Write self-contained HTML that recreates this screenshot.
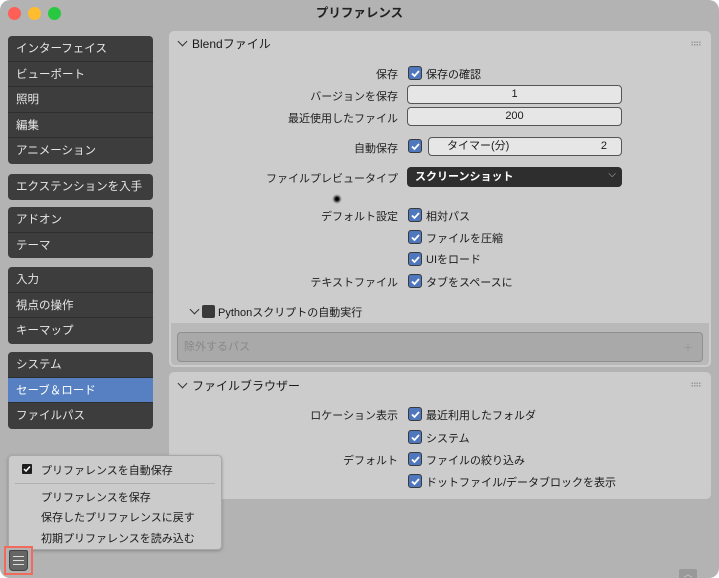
<!DOCTYPE html>
<html><head><meta charset="utf-8"><style>
*{box-sizing:border-box;margin:0;padding:0}
body{width:719px;height:578px;overflow:hidden;background:#fff;font-family:"Liberation Sans","Noto Sans CJK JP",sans-serif;font-size:11px;color:#1a1a1a;position:relative}
.win{position:absolute;left:0;top:0;width:719px;height:578px;background:#b3b3b3;border-radius:10px;overflow:hidden}
.title{position:absolute;left:0;top:0;width:719px;height:28px;text-align:center;line-height:27px;font-weight:bold;font-size:12.5px;color:#222}
.dot{position:absolute;top:7px;width:13px;height:13px;border-radius:50%}
.abs{position:absolute}
.grp{position:absolute;left:8px;width:145px;background:#3d3d3d;border-radius:4px;overflow:hidden}
.grp div{height:25.5px;line-height:26px;color:#e6e6e6;padding-left:8px;border-bottom:1px solid #2e2e2e;font-size:11.5px}
.grp div:last-child{border-bottom:none}
.grp .sel{background:#5680c2;color:#fff}
.panel{position:absolute;left:169px;width:542px;background:#cccccc;border-radius:5px}
.lbl{position:absolute;right:313px;text-align:right;white-space:nowrap;color:#222}
.cb{position:absolute;width:14px;height:14px;background:#4f77bd;border:1px solid #3a3a3a;border-radius:3px}
.cb svg{position:absolute;left:1px;top:1px}
.ct{position:absolute;white-space:nowrap}
.fld{position:absolute;background:#e6e6e6;border:1px solid #555;border-radius:4px;text-align:center;line-height:17px}
.hd{position:absolute;white-space:nowrap;font-size:12px}
.chev{display:inline-block;width:7px;height:7px;border-right:1.3px solid #333;border-bottom:1.3px solid #333;transform:rotate(45deg);margin:0 6px 3px 2px}
.grip{position:absolute;right:10px;top:10px;width:10px;height:5px;background-image:radial-gradient(#999 40%,transparent 45%);background-size:2.5px 2.5px}
</style></head><body>
<div class="win">
<div class="title">プリファレンス</div>
<div class="dot" style="left:8px;background:#fe5f57"></div>
<div class="dot" style="left:28px;background:#febc2e"></div>
<div class="dot" style="left:48px;background:#28c840"></div>

<div class="grp" style="top:36px"><div>インターフェイス</div><div>ビューポート</div><div>照明</div><div>編集</div><div>アニメーション</div></div>
<div class="grp" style="top:174px"><div>エクステンションを入手</div></div>
<div class="grp" style="top:207px"><div>アドオン</div><div>テーマ</div></div>
<div class="grp" style="top:267px"><div>入力</div><div>視点の操作</div><div>キーマップ</div></div>
<div class="grp" style="top:352px"><div>システム</div><div class="sel">セーブ＆ロード</div><div>ファイルパス</div></div>

<div class="panel" style="top:31px;height:336px">
<div class="grip"></div>
<div class="hd" style="left:8px;top:4px"><span class="chev"></span>Blendファイル</div>
<div class="lbl" style="top:35px">保存</div>
<div class="cb" style="left:239px;top:35px"><svg width="11" height="11"><path d="M2 5.5l2.5 2.5 4.5-5" stroke="#fff" stroke-width="1.8" fill="none"/></svg></div>
<div class="ct" style="left:257px;top:35px">保存の確認</div>
<div class="lbl" style="top:57px">バージョンを保存</div>
<div class="fld" style="left:238px;top:54px;width:215px;height:19px">1</div>
<div class="lbl" style="top:79px">最近使用したファイル</div>
<div class="fld" style="left:238px;top:76px;width:215px;height:19px">200</div>
<div class="lbl" style="top:109px">自動保存</div>
<div class="cb" style="left:239px;top:108px"><svg width="11" height="11"><path d="M2 5.5l2.5 2.5 4.5-5" stroke="#fff" stroke-width="1.8" fill="none"/></svg></div>
<div class="fld" style="left:259px;top:106px;width:194px;height:19px;text-align:left;padding-left:18px">タイマー(分)<span style="position:absolute;right:14px">2</span></div>
<div class="lbl" style="top:139px">ファイルプレビュータイプ</div>
<div class="abs" style="left:238px;top:136px;width:215px;height:20px;background:#2e2e2e;border-radius:4px;color:#fff;line-height:20px;padding-left:8px;font-weight:bold">スクリーンショット<span style="position:absolute;right:6px;top:-2px;color:#bbb;font-weight:normal;font-size:10px">⌵</span></div>
<div class="abs" style="left:163px;top:163px;width:10px;height:10px;border-radius:50%;background:radial-gradient(#000 20%,rgba(0,0,0,.3) 50%,transparent 70%)"></div>
<div class="lbl" style="top:177px">デフォルト設定</div>
<div class="cb" style="left:239px;top:177px"><svg width="11" height="11"><path d="M2 5.5l2.5 2.5 4.5-5" stroke="#fff" stroke-width="1.8" fill="none"/></svg></div>
<div class="ct" style="left:257px;top:177px">相対パス</div>
<div class="cb" style="left:239px;top:199px"><svg width="11" height="11"><path d="M2 5.5l2.5 2.5 4.5-5" stroke="#fff" stroke-width="1.8" fill="none"/></svg></div>
<div class="ct" style="left:257px;top:199px">ファイルを圧縮</div>
<div class="cb" style="left:239px;top:221px"><svg width="11" height="11"><path d="M2 5.5l2.5 2.5 4.5-5" stroke="#fff" stroke-width="1.8" fill="none"/></svg></div>
<div class="ct" style="left:257px;top:220px">UIをロード</div>
<div class="lbl" style="top:243px">テキストファイル</div>
<div class="cb" style="left:239px;top:243px"><svg width="11" height="11"><path d="M2 5.5l2.5 2.5 4.5-5" stroke="#fff" stroke-width="1.8" fill="none"/></svg></div>
<div class="ct" style="left:257px;top:243px">タブをスペースに</div>
<div class="ct" style="left:20px;top:273px"><span class="chev" style="margin-right:4px"></span><span style="display:inline-block;width:13px;height:13px;background:#3a3a3a;border-radius:2px;vertical-align:-2px;margin-right:3px"></span>Pythonスクリプトの自動実行</div>
<div class="abs" style="left:2px;top:292px;width:538px;height:42px;background:#b9b9b9;border-radius:0 0 4px 4px"></div>
<div class="abs" style="left:8px;top:301px;width:526px;height:30px;background:#a9a9a9;border:1px solid #8f8f8f;border-radius:4px;color:#888;line-height:28px;padding-left:6px">除外するパス<span style="position:absolute;right:10px;color:#999;font-size:14px">+</span></div>
</div>

<div class="panel" style="top:372px;height:127px">
<div class="grip"></div>
<div class="hd" style="left:8px;top:5px"><span class="chev"></span>ファイルブラウザー</div>
<div class="lbl" style="top:35px">ロケーション表示</div>
<div class="cb" style="left:239px;top:35px"><svg width="11" height="11"><path d="M2 5.5l2.5 2.5 4.5-5" stroke="#fff" stroke-width="1.8" fill="none"/></svg></div>
<div class="ct" style="left:257px;top:35px">最近利用したフォルダ</div>
<div class="cb" style="left:239px;top:58px"><svg width="11" height="11"><path d="M2 5.5l2.5 2.5 4.5-5" stroke="#fff" stroke-width="1.8" fill="none"/></svg></div>
<div class="ct" style="left:257px;top:58px">システム</div>
<div class="lbl" style="top:80px">デフォルト</div>
<div class="cb" style="left:239px;top:80px"><svg width="11" height="11"><path d="M2 5.5l2.5 2.5 4.5-5" stroke="#fff" stroke-width="1.8" fill="none"/></svg></div>
<div class="ct" style="left:257px;top:80px">ファイルの絞り込み</div>
<div class="cb" style="left:239px;top:102px"><svg width="11" height="11"><path d="M2 5.5l2.5 2.5 4.5-5" stroke="#fff" stroke-width="1.8" fill="none"/></svg></div>
<div class="ct" style="left:257px;top:102px">ドットファイル/データブロックを表示</div>
</div>

<div class="abs" style="left:8px;top:455px;width:214px;height:95px;background:#cbcbcb;border:1px solid #a8a8a8;border-radius:4px;box-shadow:0 1px 3px rgba(0,0,0,.25)">
<div class="abs" style="left:13px;top:8px;width:10px;height:10px;background:#1e1e1e;border-radius:1px"><svg width="10" height="10" style="position:absolute"><path d="M2 5l2 2 4-4.5" stroke="#fff" stroke-width="1.5" fill="none"/></svg></div>
<div class="ct" style="left:32px;top:6px">プリファレンスを自動保存</div>
<div class="abs" style="left:6px;top:27px;width:200px;height:1px;background:#b0b0b0"></div>
<div class="ct" style="left:32px;top:33px">プリファレンスを保存</div>
<div class="ct" style="left:32px;top:53px">保存したプリファレンスに戻す</div>
<div class="ct" style="left:32px;top:74px">初期プリファレンスを読み込む</div>
</div>

<div class="abs" style="left:4px;top:546px;width:29px;height:29px;border:2px solid #f06b5c;background:#b3b3b3">
<div class="abs" style="left:3px;top:2px;width:19px;height:21px;background:#656565;border-radius:2px 2px 4px 4px;border:1px solid #444"></div>
<div class="abs" style="left:7px;top:8px;width:11px;height:1px;background:#ddd"></div>
<div class="abs" style="left:7px;top:12px;width:11px;height:1px;background:#ddd"></div>
<div class="abs" style="left:7px;top:16px;width:11px;height:1px;background:#ddd"></div>
</div>
<div class="abs" style="left:679px;top:569px;width:18px;height:9px;background:#999;border-radius:2px 2px 0 0;color:#ccc;font-size:9px;text-align:center;line-height:10px">︿</div>
</div>
</body></html>
